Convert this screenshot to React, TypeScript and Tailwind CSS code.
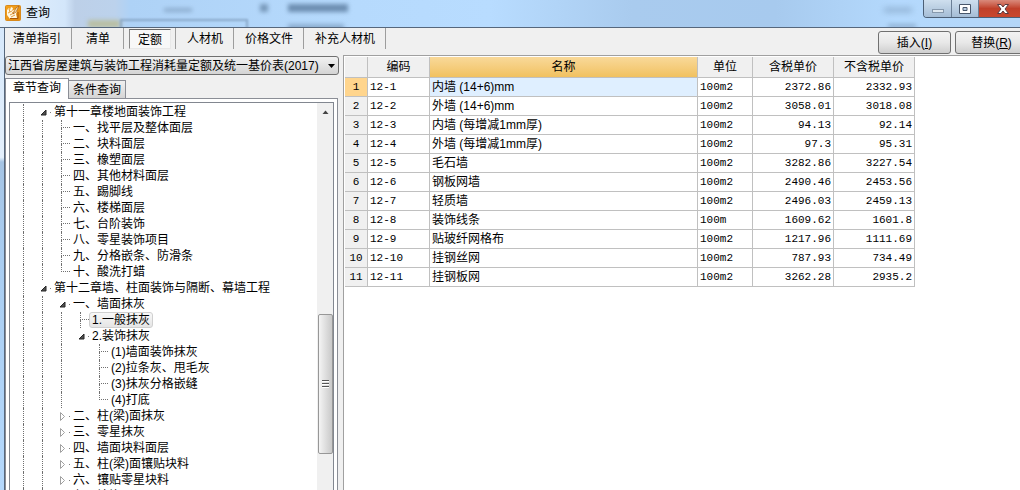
import { useState } from 'react';

type TreeItem = {
  label: string;
  level: number;
  state?: 'open' | 'closed';
  last?: boolean;
  lines: number[];
};

type PriceRow = {
  code: string;
  name: string;
  unit: string;
  taxed: string;
  untaxed: string;
};

const toolbarTabs = ['清单指引', '清单', '定额', '人材机', '价格文件', '补充人材机'];

// `lines` lists the ancestor columns whose vertical guide passes through the row
const treeItems: TreeItem[] = [
  { label: '第十一章楼地面装饰工程', level: 1, state: 'open', lines: [0] },
  { label: '一、找平层及整体面层', level: 2, lines: [0, 1] },
  { label: '二、块料面层', level: 2, lines: [0, 1] },
  { label: '三、橡塑面层', level: 2, lines: [0, 1] },
  { label: '四、其他材料面层', level: 2, lines: [0, 1] },
  { label: '五、踢脚线', level: 2, lines: [0, 1] },
  { label: '六、楼梯面层', level: 2, lines: [0, 1] },
  { label: '七、台阶装饰', level: 2, lines: [0, 1] },
  { label: '八、零星装饰项目', level: 2, lines: [0, 1] },
  { label: '九、分格嵌条、防滑条', level: 2, lines: [0, 1] },
  { label: '十、酸洗打蜡', level: 2, last: true, lines: [0, 1] },
  { label: '第十二章墙、柱面装饰与隔断、幕墙工程', level: 1, state: 'open', lines: [0] },
  { label: '一、墙面抹灰', level: 2, state: 'open', lines: [0, 1] },
  { label: '1.一般抹灰', level: 3, lines: [0, 1, 2] },
  { label: '2.装饰抹灰', level: 3, state: 'open', lines: [0, 1, 2] },
  { label: '(1)墙面装饰抹灰', level: 4, lines: [0, 1, 2] },
  { label: '(2)拉条灰、甩毛灰', level: 4, lines: [0, 1, 2] },
  { label: '(3)抹灰分格嵌缝', level: 4, lines: [0, 1, 2] },
  { label: '(4)打底', level: 4, last: true, lines: [0, 1, 2] },
  { label: '二、柱(梁)面抹灰', level: 2, state: 'closed', lines: [0, 1] },
  { label: '三、零星抹灰', level: 2, state: 'closed', lines: [0, 1] },
  { label: '四、墙面块料面层', level: 2, state: 'closed', lines: [0, 1] },
  { label: '五、柱(梁)面镶贴块料', level: 2, state: 'closed', lines: [0, 1] },
  { label: '六、镶贴零星块料', level: 2, state: 'closed', lines: [0, 1] },
  { label: '七、墙饰面', level: 2, state: 'closed', lines: [0, 1] },
];

const rows: PriceRow[] = [
  { code: '12-1', name: '内墙 (14+6)mm', unit: '100m2', taxed: '2372.86', untaxed: '2332.93' },
  { code: '12-2', name: '外墙 (14+6)mm', unit: '100m2', taxed: '3058.01', untaxed: '3018.08' },
  { code: '12-3', name: '内墙 (每增减1mm厚)', unit: '100m2', taxed: '94.13', untaxed: '92.14' },
  { code: '12-4', name: '外墙 (每增减1mm厚)', unit: '100m2', taxed: '97.3', untaxed: '95.31' },
  { code: '12-5', name: '毛石墙', unit: '100m2', taxed: '3282.86', untaxed: '3227.54' },
  { code: '12-6', name: '钢板网墙', unit: '100m2', taxed: '2490.46', untaxed: '2453.56' },
  { code: '12-7', name: '轻质墙', unit: '100m2', taxed: '2496.03', untaxed: '2459.13' },
  { code: '12-8', name: '装饰线条', unit: '100m', taxed: '1609.62', untaxed: '1601.8' },
  { code: '12-9', name: '贴玻纤网格布', unit: '100m2', taxed: '1217.96', untaxed: '1111.69' },
  { code: '12-10', name: '挂钢丝网', unit: '100m2', taxed: '787.93', untaxed: '734.49' },
  { code: '12-11', name: '挂钢板网', unit: '100m2', taxed: '3262.28', untaxed: '2935.2' },
];

function AppIcon() {
  return (
    <svg width="16" height="16" viewBox="0 0 16 16" aria-hidden="true">
      <defs>
        <linearGradient id="gold" x1="0" y1="0" x2="1" y2="1">
          <stop offset="0" stopColor="#f6a51f" />
          <stop offset="1" stopColor="#e08a12" />
        </linearGradient>
      </defs>
      <rect x="0.5" y="0.5" width="15" height="15" rx="1" fill="url(#gold)" stroke="#d98a1c" />
      <path d="M2 5l2-2 1 2 1-3 2 1-1 3 4-2 1 2-1 3 1 4-2 1H5l-3-4z" fill="#fff8e4" />
      <path d="M4 4l1 3M3 8l4-2M7 8l3-2M5 10l4-2M6 12l4-2" stroke="#d9891a" strokeWidth="0.8" fill="none" />
      <path d="M14 1l-3 2-3 6 3-2z" fill="#fff3c8" stroke="#a85607" strokeWidth="0.7" />
      <path d="M13 7v6.500H5" stroke="#a85607" strokeWidth="1" fill="none" />
    </svg>
  );
}

function Titlebar() {
  return (
    <header className="relative flex h-7 shrink-0 items-start overflow-hidden border-b border-[#56677c] bg-[linear-gradient(90deg,#e6f2fd_0,#d3e6fa_65px,#bdd0e8_75px,#bcd2ec_115px,#aed2f6_130px,#b6dafd_35%,#b8dcff_48%,#a9cbee_62%,#a7caee_76%,#b4d9fd_88%,#b4d6f8_100%)]">
      <div className="absolute top-5 left-22 h-2 w-8 bg-[#b9bfa4] blur-[2px]" />
      <div className="absolute top-[19px] left-30 h-3 w-32 border-2 border-[#7895b5] opacity-70 blur-[1px]" />
      <div className="absolute top-2 left-41 h-1 w-7 bg-[#7f9dbd] opacity-70 blur-[2px]" />
      <div className="absolute top-1 left-65 h-2 w-2 bg-[#5f7f9f] opacity-70 blur-[2px]" />
      <div className="absolute top-1 left-72 h-2 w-15 bg-[#4f6f92] opacity-70 blur-[2px]" />
      <div className="absolute top-6 left-72 h-2 w-14 bg-[#6483a5] opacity-50 blur-[2px]" />
      <div className="absolute top-2 left-221 h-1 w-7 bg-[#7695b5] opacity-70 blur-[3px]" />
      <div className="absolute top-6 left-222 h-1 w-7 bg-[#7695b5] opacity-60 blur-[2px]" />
      <div className="relative flex flex-1 items-center gap-[5px] pt-[5px] pl-[5px]">
        <AppIcon />
        <h1>查询</h1>
      </div>
      <div className="relative -mr-2 flex h-[18px] overflow-hidden rounded-bl-sm border border-t-0 border-[#4c5f76]">
        <button aria-label="最小化" className="flex w-7 items-end justify-center border-r border-[#6b7f96] bg-linear-to-b from-[#cfdfee] to-[#a5bdd6] pb-1">
          <span className="h-1 w-3 border border-[#8799ad] bg-[#dfe8f0]" />
        </button>
        <button aria-label="最大化" className="flex w-[27px] items-center justify-center border-r border-[#6b7f96] bg-linear-to-b from-[#cfdfee] to-[#a5bdd6]">
          <svg width="12" height="10" viewBox="0 0 12 10" aria-hidden="true">
            <path d="M.5.5h11v9H.5zM4 3.500h4v3H4z" fill="#fff" fillRule="evenodd" stroke="#48566a" />
          </svg>
        </button>
        <button aria-label="关闭" className="flex w-12 items-center justify-center bg-linear-to-b from-[#d98a7b] via-[#c0402a] to-[#c9472d]">
          <svg width="12" height="10" viewBox="0 0 12 10" aria-hidden="true">
            <path d="M.5.5h3.500L6 3 8 .5h3.500L8 5l3.500 4.500H8L6 7 4 9.500H.5L4 5z" fill="#fff" stroke="#5a3a40" />
          </svg>
        </button>
      </div>
    </header>
  );
}

function Toolbar({ active, onSelect }: { active: string; onSelect: (tab: string) => void }) {
  return (
    <div className="flex h-[27px] shrink-0 items-start justify-between">
      <nav className="flex h-[21px]">
        {toolbarTabs.map((tab) => (
          <div key={tab} className="flex border-r border-[#9d9d9d] pr-1 pl-[5px] first:pl-0.5">
            <button
              onClick={() => onSelect(tab)}
              className={
                tab === active
                  ? 'mt-px min-w-[42px] border border-[#e8e8e8] border-t-[#666] border-l-[#888] bg-[#f8f8f8] px-[5px] pt-0.5'
                  : 'min-w-[42px] px-1.5'
              }
            >
              {tab}
            </button>
          </div>
        ))}
      </nav>
      <div className="-mr-2 flex gap-1 pt-[3px]">
        <CommandButton label="插入" hotkey="I" />
        <CommandButton label="替换" hotkey="R" />
      </div>
    </div>
  );
}

function CommandButton({ label, hotkey }: { label: string; hotkey: string }) {
  return (
    <button className="h-[23px] w-[73px] rounded-[3px] border border-[#707070] bg-linear-to-b from-[#f3f3f3] via-[#e8e8e8] to-[#cfcfcf]">
      {label}(<u>{hotkey}</u>)
    </button>
  );
}

function Expander({ state }: { state: 'open' | 'closed' }) {
  return (
    <svg width="7" height="9" viewBox="0 0 7 9" className="shrink-0" aria-hidden="true">
      {state === 'open' ? (
        <path d="M6 2v5H1z" fill="#505050" stroke="#262626" />
      ) : (
        <path d="M1.500.5l4 4-4 4z" fill="#fff" stroke="#a0a0a0" />
      )}
    </svg>
  );
}

function TreeRow({ item, selected, onSelect }: { item: TreeItem; selected: boolean; onSelect: () => void }) {
  const columns = Array.from({ length: item.level }, (_, i) => i);
  return (
    <li className="flex h-4 items-center pl-[13px]" role="treeitem" aria-selected={selected}>
      {columns.map((col) => (
        <span
          key={col}
          className={
            !item.lines.includes(col)
              ? 'w-[19px] shrink-0'
              : 'h-4 w-[19px] shrink-0 border-l border-dotted border-[#707070]'
          }
        />
      ))}
      {item.state ? (
        <span className="-ml-0.5 flex w-[13px] shrink-0 items-center gap-[3px]">
          <Expander state={item.state} />
          <span className="h-px w-px bg-[#808080]" />
        </span>
      ) : (
        <span className="flex h-4 w-[11px] shrink-0 flex-col">
          <span className="h-2 w-[9px] border-b border-l border-dotted border-[#707070]" />
          {!item.last && <span className="h-2 border-l border-dotted border-[#707070]" />}
        </span>
      )}
      <button
        onClick={onSelect}
        className={
          selected
            ? '-ml-0.5 h-4 rounded-[3px] border border-[#d0d0d0] bg-linear-to-b from-[#f8f8f8] to-[#e5e5e5] px-0.5 leading-[14px] whitespace-nowrap'
            : 'h-4 border border-transparent leading-[14px] whitespace-nowrap'
        }
      >
        {item.label}
      </button>
    </li>
  );
}

function Scrollbar() {
  return (
    <div className="flex w-4 shrink-0 flex-col items-center bg-[#f0f0f0]">
      <svg width="15" height="17" viewBox="0 0 15 17" className="shrink-0" aria-hidden="true">
        <path d="M4.500 11l3-3.500 3 3.500z" fill="#444" />
      </svg>
      <div className="grow-[194]" />
      <div className="flex h-[140px] w-[15px] shrink-0 flex-col items-center justify-center gap-px rounded-[2px] border border-[#979797] bg-linear-to-r from-[#f4f4f4] to-[#c9c9c9]">
        <span className="h-0.5 w-[7px] border-t border-[#555] bg-white" />
        <span className="h-0.5 w-[7px] border-t border-[#555] bg-white" />
        <span className="h-0.5 w-[7px] border-t border-[#555] bg-white" />
      </div>
      <div className="grow-[36]" />
    </div>
  );
}

function Sidebar() {
  const [selected, setSelected] = useState('1.一般抹灰');
  return (
    <aside className="flex w-[338px] shrink-0 flex-col">
      <div className="relative mt-px mr-1 shrink-0">
        <select
          aria-label="定额库"
          className="block h-[19px] w-full appearance-none rounded-[3px] border border-[#707070] bg-linear-to-b from-[#f2f2f2] to-[#d4d4d4] pl-0.5 leading-4"
        >
          <option>江西省房屋建筑与装饰工程消耗量定额及统一基价表(2017)</option>
        </select>
        <svg width="7" height="4" viewBox="0 0 7 4" className="pointer-events-none absolute top-2 right-1" aria-hidden="true">
          <path d="M0 0h7L3.500 4z" fill="#000" />
        </svg>
      </div>
      <div className="z-10 mt-[3px] flex h-5 shrink-0 items-end">
        <button className="-mb-px h-[21px] border border-b-0 border-[#8b8e96] bg-white px-[7px] pb-0.5">章节查询</button>
        <button className="h-[18px] border border-b-0 border-l-0 border-[#8b8e96] bg-linear-to-b from-[#f0f0f0] to-[#d5d5d5] px-1">条件查询</button>
      </div>
      <div className="mr-[5px] flex min-h-0 flex-1 border border-b-0 border-[#8b8e96] bg-white px-[3px] pt-[3px]">
        <div className="flex min-h-0 min-w-0 flex-1 border border-b-0 border-[#828790]">
          <ul className="min-w-0 flex-1 overflow-hidden pt-px" role="tree">
            {treeItems.map((item) => (
              <TreeRow
                key={item.label}
                item={item}
                selected={item.label === selected}
                onSelect={() => setSelected(item.label)}
              />
            ))}
          </ul>
          <Scrollbar />
        </div>
      </div>
    </aside>
  );
}

function PriceTable() {
  const [current, setCurrent] = useState('12-1');
  const cell = 'border-r border-b border-[#c0c0c0] p-0';
  const mono = "font-['Liberation_Mono',monospace] text-[11px]";
  return (
    <main className="min-w-0 flex-1 overflow-hidden border-t border-l border-[#a0a0a0] bg-white pt-px pl-px">
      <table className="w-[570px] table-fixed border-separate border-spacing-0">
        <colgroup>
          <col className="w-[23px]" />
          <col className="w-[62px]" />
          <col className="w-[268px]" />
          <col className="w-[55px]" />
          <col className="w-[81px]" />
          <col className="w-[81px]" />
        </colgroup>
        <thead>
          <tr className="h-[21px] bg-[#f0f0f0]">
            <th className={`${cell} font-normal`} aria-label="序号" />
            <th className={`${cell} font-normal`}>编码</th>
            <th className={`${cell} bg-linear-to-b from-[#f9d999] to-[#f1c15f] font-normal`}>名称</th>
            <th className={`${cell} font-normal`}>单位</th>
            <th className={`${cell} font-normal`}>含税单价</th>
            <th className={`${cell} font-normal`}>不含税单价</th>
          </tr>
        </thead>
        <tbody>
          {rows.map((row, index) => {
            const active = row.code === current;
            return (
              <tr key={row.code} className="h-[19px]" onClick={() => setCurrent(row.code)}>
                <th className={`${cell} ${mono} font-normal ${active ? 'bg-[#ffd58d]' : 'bg-[#f0f0f0]'}`}>{index + 1}</th>
                <td className={`${cell} ${mono} pl-0.5`}>{row.code}</td>
                <td className={`${cell} pl-0.5 ${active ? 'bg-[#dfefff]' : ''}`}>{row.name}</td>
                <td className={`${cell} ${mono} pl-0.5`}>{row.unit}</td>
                <td className={`${cell} ${mono} pr-0.5 text-right`}>{row.taxed}</td>
                <td className={`${cell} ${mono} pr-0.5 text-right`}>{row.untaxed}</td>
              </tr>
            );
          })}
        </tbody>
      </table>
    </main>
  );
}

export default function App() {
  const [tab, setTab] = useState('定额');

  return (
    <div className="flex h-screen flex-col overflow-hidden bg-[#b9d7f5] font-['Liberation_Sans','Noto_Sans_CJK_SC',sans-serif] text-xs leading-4 text-black">
      <Titlebar />
      <div className="flex min-h-0 flex-1 bg-[linear-gradient(180deg,#d6e8fb_0,#e4f0fc_28%,#a5c4e4_29%,#a9cdf1_50%,#b4d8fc_100%)] pl-1">
        <div className="flex min-w-0 flex-1 flex-col overflow-hidden border-l border-[#56677c] bg-[#f0f0f0]">
          <Toolbar active={tab} onSelect={setTab} />
          <div className="flex min-h-0 flex-1">
            <Sidebar />
            <PriceTable />
          </div>
        </div>
      </div>
    </div>
  );
}
